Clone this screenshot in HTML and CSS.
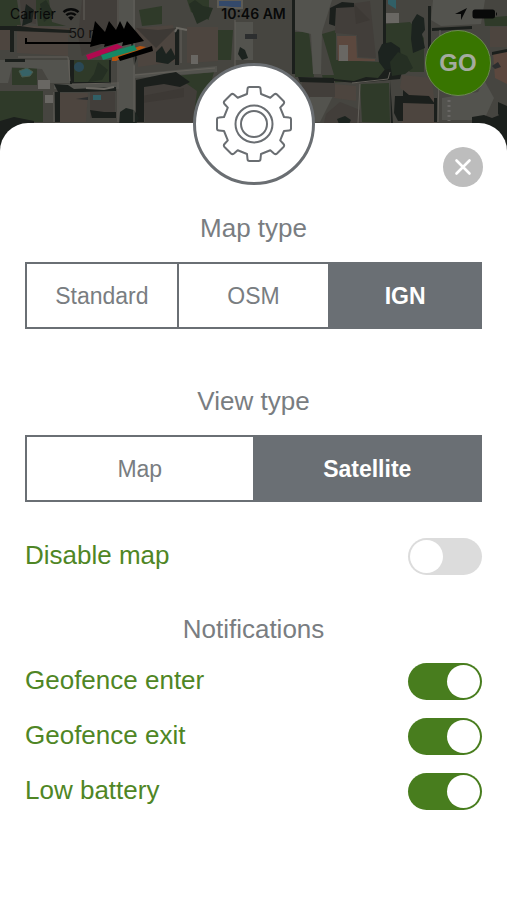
FILE: index.html
```
<!DOCTYPE html>
<html lang="en">
<head>
    <meta charset="UTF-8">
    <meta name="viewport" content="width=device-width, initial-scale=1.0">
    <title>Map settings</title>
    <link rel="stylesheet" href="styles.css">
</head>
<body>

    <header class="map">
        <svg class="map-tiles" viewBox="0 0 507 153" preserveAspectRatio="xMidYMin slice" aria-hidden="true">
            <rect width="507" height="153" fill="#464540"/>
            <!-- gardens -->
            <g fill="#2f3a29">
                <path d="M0 0h17l4 26H0zM35 0h14l3 22 14 4H38zM72 60h38v22H72zM12 68h25v17H12zM0 91h43v31H0z"/>
                <path d="M139 10l23-4v18l-20 2zM187 0h22v20l-18-8zM218 30h15l-2 30h-14zM176 76l38-4-14 50h-8l4-30z"/>
                <path d="M295 32h14l5 45h-19zM322 34l14-4v30l44 2 14-10 12 20-20 8-62 3-2-8h12zM386 24l24-2 14 16v34h-14l-24-20zM360 84l29-1 1 40-28-1zM484 18l23-2v10h-22z"/>
            </g>
            <!-- streets and paved yards -->
            <g fill="#53534e">
                <path d="M119 0h16v122h-16zM0 60h72v23H50l-8-14-30-2-4 16H0zM135 74l82-8v6l-82 6zM294 0h38l-10 32-1 42h-8l-2-40-17-4zM235 22h18v38h-18z"/>
                <path d="M433 0h52l-4 24-40 2-10-6zM442 98l36-6 6-12 10 18-10 22h-42zM54 84h65v5H54zM310 96l24-2-14 28h-10z"/>
            </g>
            <!-- roofs -->
            <g fill="#4d453f">
                <path d="M0 29h13v21H0zM17 25l51 3v28l-51-3zM136 28l37-3 7 36-42 6zM187 27h31v34l-31 2zM60 93h28l-2 29H60zM490 27h17v20h-17z"/>
                <path d="M402 75l30 3 3 30-9 2-26-22zM402 102h34v21h-34zM334 84l22 2v15l-22-3z"/>
            </g>
            <g fill="#423e3a">
                <path d="M82 0h37v38l-37 18-4-20zM142 86l41-5 14 10-4 31h-48zM90 92h25v26H90zM302 80h33v17h-33zM20 0h16v24l-14-2zM326 114l14-12 20 8v13h-36z"/>
                <path d="M336 6l34-5 6 57-18-1-1-22-22-2z"/>
            </g>
            <path fill="#5c483e" d="M337 36h19l1 22 18 1v2h-37zM493 53l14-1v32l-12-6z"/>
            <path fill="#3d3935" d="M354 4l2 20 14-4zM136 28l20 20 20-20-18 2zM142 96l42-8v9l-42 6z"/>
            <path fill="#696763" d="M339 45h9v16h-9zM45 95h8v8h-8zM385 13h14v10h-14zM191 55h7v9h-7zM38 80h12v9H38z"/>
            <!-- shadows and hedges -->
            <g fill="#1b1f1c">
                <path d="M0 26h20l14 2 36 2v3l-56-2v21h-4V30H0zM5 59h20v3H5zM54 84l14 1 6 4 42-2v4l-34 1h-24zM54 92h6v30h-5z"/>
                <path d="M136 80l28-6 12-2 14 10-10 5-16-3-20 3v35h-8zM72 60h2v22h35V60h2v24H70V60z"/>
                <path d="M129 28l8 30-3 8zM292 0h3v74h-3zM330 8l12-6 12 1v4l-18 1-1 18-6-2zM383 0h3v48h-3zM428 6h3v50h-3zM175 28h4v37h-4z"/>
                <path d="M298 77l36 1v5l-34-1zM334 79l20 2 12-4 12 1 8-10 18-3-4 14-44 4-22-2zM395 96h8v-6l6 5 20 1 6 8-32-1v18h-5l-4-8zM390 80l3 43h-2z"/>
                <path d="M432 28l40-2v3l-40 2zM492 52l15-3v3l-15 3zM434 98h3v24h-3z"/>
                <path d="M90 110l14 2h12v6H92zM498 102l9 4v18l-9-10zM0 121l14-4 20 4v32H0zM472 117l12-2 8 3 15-6v41h-35z"/>
            </g>
            <g fill="#1c231f">
                <path d="M120 112l6-4 8 2 5 8-4 8h-16zM378 52l4-8 9-2 9 6 1 12-6 8-10 2-6-8zM412 22l5-8 7 4 1 12-3 4 3 14-12 5-2-14z"/>
                <path d="M240 47l5 3 3 8-6 2-4-6zM156 52l6-6 4 8 5-6 5 10-8 6-12-2zM26 4l8 6-2 12-10 4zM337 119l8-3 6 4-2 4h-10z"/>
            </g>
            <g fill="#252f23">
                <path d="M390 62l8-10 9 4 6 12-8 6-13 2zM189 4l6-4 8 6 10 2-4 10-12 6zM98 62l10 8-6 10-14 2 6-8zM40 4l6-4 8 14-10 8z"/>
            </g>
            <path fill="none" stroke="#63605a" d="M18 57h50l2 24M72 84l47-1M135 75l80-7M54 92v30M118 0v122M134 0v122M181 28v35M235 20v54M84 0v20M360 84l-2 39M440 30l-2 92M390 72l-2 7-36 4"/>
            <path fill="none" stroke="#6a6862" stroke-width="2" d="M187 30l-10-2-2 4M86 88l18 1 10-2"/>
            <!-- pools and cars -->
            <path fill="#34496a" stroke="#5d5b55" stroke-width="2" d="M218 0h24v8h-10l-8-1h-6z"/>
            <path fill="#376367" stroke="#4b5a4c" d="M19 71l8-3 6 4-3 4-8 1z"/>
            <circle cx="79" cy="67" r="5" fill="#2a4855"/>
            <path fill="#315f66" d="M388 0h8v9l-8-5zM93 95h8v5h-8z"/>
            <path stroke="#696764" stroke-width="3" stroke-dasharray="2 3" d="M449 100v21"/>
            <path fill="#2c2e2f" d="M245 34h12v5h-12zM492 66l6-4 3 5-6 2zM76 99l12-2v3z"/>
        </svg>

        <div class="status-bar">
            <span class="carrier">Carrier
                <svg width="18" height="14" viewBox="0 0 18 14" aria-hidden="true">
                    <path d="M1.500 5.200a11 11 0 0 1 15 0M4.300 8.200a7 7 0 0 1 9.400 0" fill="none" stroke="#080909" stroke-width="2.400"/>
                    <path d="M9 13.500L6.200 10.600a4 4 0 0 1 5.600 0z" fill="#080909"/>
                </svg>
            </span>
            <span class="time">10:46 AM</span>
            <svg class="battery" width="42" height="14" viewBox="0 0 42 14" aria-hidden="true">
                <path d="M12 1L0 7h6v6z" fill="#080909"/>
                <rect x="17.500" y="2.500" width="22.500" height="9" rx="2.500" fill="#080909"/>
                <path d="M41 5v4q2-2 0-4z" fill="#080909"/>
            </svg>
        </div>

        <span class="scale">50 m</span>
        <svg class="flags" width="130" height="44" viewBox="0 0 130 44" aria-hidden="true">
            <path d="M1 19v5h90" fill="none" stroke="#000" stroke-width="2"/>
            <path d="M70 2L65 28L80 24L79 28L98 23L97 27L119 22L102 2L99 10L95 2L91 11L84 2L80 13z"/>
            <path d="M61 36L92 25L98 28L63 41z" fill="#b0094f"/>
            <path d="M87 37L115 27L121 28L91 42L87 42z" fill="#b65410"/>
            <path d="M76 36L109 26L112 31L78 41z" fill="#158865"/>
            <path d="M93 38L127 27L128 32L95 42z"/>
        </svg>

        <button class="go" type="button">GO</button>
    </header>

    <main class="sheet">
        <div class="gear">
            <svg width="80" height="80" viewBox="-40 -40 80 80" fill="none" stroke="#6a6e72" stroke-width="2" stroke-linejoin="round" aria-hidden="true">
                <path d="M-7-30L-6.500-35Q-6.500-37-4.500-37H4.500Q6.500-37 6.500-35L7-30L16.300-26.200L20-29.500Q21.600-30.800 23-29.500L29.500-23Q30.800-21.600 29.500-20L26.200-16.300L30-7L35-6.500Q37-6.500 37-4.500V4.500Q37 6.500 35 6.500L30 7L26.200 16.300L29.500 20Q30.800 21.600 29.500 23L23 29.500Q21.600 30.800 20 29.500L16.300 26.200L7 30L6.500 35Q6.500 37 4.500 37H-4.500Q-6.500 37-6.500 35L-7 30L-16.300 26.200L-20 29.500Q-21.600 30.800-23 29.500L-29.500 23Q-30.800 21.600-29.500 20L-26.200 16.300L-30 7L-35 6.500Q-37 6.500-37 4.500V-4.500Q-37-6.500-35-6.500L-30-7L-26.200-16.300L-29.500-20Q-30.800-21.600-29.500-23L-23-29.500Q-21.600-30.800-20-29.500L-16.300-26.200z"/>
                <circle r="18.500"/>
                <circle r="13"/>
            </svg>
        </div>
        <button class="close" type="button" aria-label="Close">
            <svg width="18" height="18" viewBox="0 0 18 18" aria-hidden="true">
                <path d="M2.500 2.500L15.500 15.500M15.500 2.500L2.500 15.500" stroke="#fff" stroke-width="2.600" stroke-linecap="round"/>
            </svg>
        </button>

        <h2 id="mapType">Map type</h2>
        <div class="segments" role="radiogroup" aria-labelledby="mapType">
            <label><input type="radio" name="mapType"><span>Standard</span></label>
            <label><input type="radio" name="mapType"><span>OSM</span></label>
            <label><input type="radio" name="mapType" checked><span>IGN</span></label>
        </div>

        <h2 class="spaced" id="viewType">View type</h2>
        <div class="segments" role="radiogroup" aria-labelledby="viewType">
            <label><input type="radio" name="viewType"><span>Map</span></label>
            <label><input type="radio" name="viewType" checked><span>Satellite</span></label>
        </div>

        <div class="switches disable">
            <div class="row">
                <label for="disableMap">Disable map</label>
                <input type="checkbox" role="switch" id="disableMap">
            </div>
        </div>

        <h2>Notifications</h2>
        <div class="switches">
            <div class="row">
                <label for="geoEnter">Geofence enter</label>
                <input type="checkbox" role="switch" id="geoEnter" checked>
            </div>
            <div class="row">
                <label for="geoExit">Geofence exit</label>
                <input type="checkbox" role="switch" id="geoExit" checked>
            </div>
            <div class="row">
                <label for="lowBattery">Low battery</label>
                <input type="checkbox" role="switch" id="lowBattery" checked>
            </div>
        </div>
    </main>

</body>
</html>
```
FILE: styles.css
```
* {
    box-sizing: border-box;
}

body {
    margin: 0;
    min-height: 100vh;
    display: flex;
    flex-direction: column;
    background-color: white;
    color: #797d81;
    font-family: "Liberation Sans", Arial, sans-serif;
}

/* map behind the sheet */
.map {
    position: relative;
    height: 153px;
    overflow: hidden;
    background-color: #464540;
}

.map-tiles {
    position: absolute;
    top: 0;
    left: 0;
    width: 100%;
    height: 100%;
}

.status-bar {
    position: relative;
    display: grid;
    grid-template-columns: 1fr auto 1fr;
    align-items: center;
    height: 27px;
    padding: 0 10px;
    color: #080909;
    font-family: Inter, sans-serif;
    font-size: 14px;
}

.carrier {
    display: flex;
    align-items: center;
    gap: 6px;
}

.time {
    font-weight: 600;
}

.battery {
    justify-self: end;
}

.scale {
    position: absolute;
    top: 25px;
    left: 69px;
    color: #111;
    font-size: 14px;
    line-height: 16px;
}

.flags {
    position: absolute;
    top: 19px;
    left: 25px;
}

.go {
    position: absolute;
    top: 30px;
    right: 16px;
    width: 66px;
    height: 66px;
    padding: 0;
    border: 1px solid #6b8a50;
    border-radius: 50%;
    background-color: #387500;
    color: #a5aba0;
    font: bold 24px "Liberation Sans", Arial, sans-serif;
}

/* settings sheet */
.sheet {
    position: relative;
    flex: 1;
    margin-top: -30px;
    padding: 90px 25px 40px;
    border-radius: 28px 28px 0 0;
    background-color: white;
}

.gear {
    position: absolute;
    top: -60px;
    left: 50%;
    width: 122px;
    height: 122px;
    display: flex;
    align-items: center;
    justify-content: center;
    border: 3px solid #6a6e72;
    border-radius: 50%;
    background-color: white;
    transform: translateX(-50%);
}

.close {
    position: absolute;
    top: 24px;
    right: 24px;
    width: 40px;
    height: 40px;
    display: flex;
    align-items: center;
    justify-content: center;
    padding: 0;
    border: none;
    border-radius: 50%;
    background-color: #bdbdbd;
}

h2 {
    margin: 0 0 19px;
    font-size: 26px;
    font-weight: normal;
    line-height: 30px;
    text-align: center;
}

h2.spaced {
    margin-top: 57px;
}

.segments {
    display: flex;
    height: 67px;
    border: 2px solid #6a6f74;
    font-size: 23px;
}

.segments label {
    position: relative;
    flex: 1;
    display: flex;
}

.segments label + label {
    border-left: 2px solid #6a6f74;
}

.segments input {
    position: absolute;
    margin: 0;
    opacity: 0;
}

.segments span {
    flex: 1;
    display: flex;
    align-items: center;
    justify-content: center;
    padding-top: 2px;
}

.segments input:checked + span {
    background-color: #6a6f74;
    color: white;
    font-weight: bold;
}

.switches {
    display: flex;
    flex-direction: column;
    gap: 18px;
}

.disable {
    margin: 36px 0 39px;
}

.row {
    display: flex;
    align-items: center;
    justify-content: space-between;
    height: 37px;
    color: #4f8625;
    font-size: 26px;
    line-height: 30px;
}

.row label {
    padding-bottom: 4px;
}

.row input {
    appearance: none;
    width: 74px;
    height: 37px;
    margin: 0;
    padding: 2px;
    border-radius: 19px;
    background-color: #dcdcdc;
}

.row input::before {
    content: "";
    display: block;
    width: 33px;
    height: 33px;
    border-radius: 50%;
    background-color: white;
}

.row input:checked {
    background-color: #487d1e;
}

.row input:checked::before {
    margin-left: auto;
}
```
